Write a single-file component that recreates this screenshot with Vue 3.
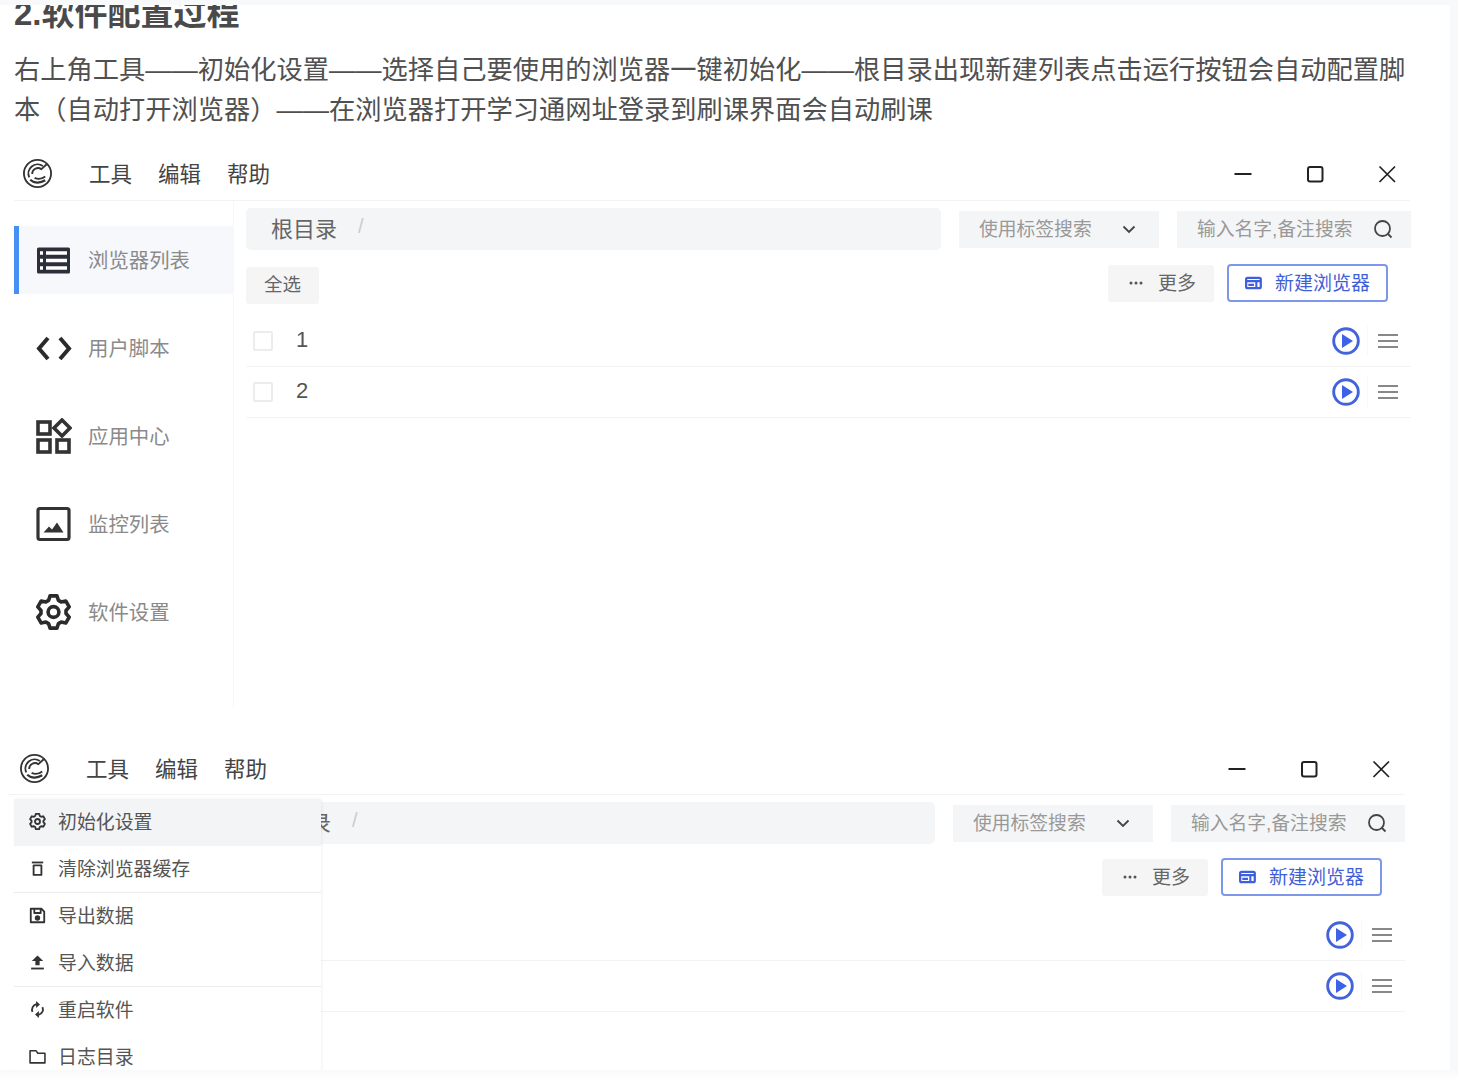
<script setup>
const text1 = '右上角工具——初始化设置——选择自己要使用的浏览器一键初始化——根目录出现新建列表点击运行按钮会自动配置脚本（自动打开浏览器）——在浏览器打开学习通网址登录到刷课界面会自动刷课'
const windows = [{ id: 1, nav: true }, { id: 2, nav: false }]
const navItems = [
  { label: '浏览器列表', icon: 'list', active: true },
  { label: '用户脚本', icon: 'code' },
  { label: '应用中心', icon: 'apps' },
  { label: '监控列表', icon: 'image' },
  { label: '软件设置', icon: 'gear' }
]
const menuItems = [
  { label: '初始化设置', icon: 'gear', hover: true },
  { label: '清除浏览器缓存', icon: 'trash', divider: true },
  { label: '导出数据', icon: 'save' },
  { label: '导入数据', icon: 'upload', divider: true },
  { label: '重启软件', icon: 'sync' },
  { label: '日志目录', icon: 'folder' }
]
const gearPath = Array.from({ length: 6 }, (_, i) => {
  const a = i * 60 - 90
  return [[8.4, a - 23], [11, a - 12], [11, a + 12], [8.4, a + 23]]
}).flat().map(([r, d], k) => {
  const t = (d * Math.PI) / 180
  return (k ? 'L' : 'M') + (12 + r * Math.cos(t)).toFixed(2) + ' ' + (12 + r * Math.sin(t)).toFixed(2)
}).join(' ') + ' Z'
</script>

<template>
  <div class="page">
    <div class="article">
      <h2 class="heading">2.软件配置过程</h2>
      <p class="para">{{ text1 }}</p>
    </div>

    <section v-for="w in windows" :key="w.id" class="window" :class="'window-' + w.id">
      <header class="titlebar">
        <svg class="logo" viewBox="0 0 32 32" fill="none" stroke="#333" stroke-width="1.900">
          <circle cx="16" cy="16" r="14" />
          <path d="M21.500 8.200A9.500 9.500 0 0 0 7.500 20" />
          <path d="M10.500 16.500a6 6 0 0 1 9.500-5l5.500-5" />
          <path d="M13 20.500c3 1.500 7 1.500 11-1.500" />
          <path d="M8.500 22.500c3.500 3.500 10 4 15.500.5" stroke-width="2.300" />
        </svg>
        <nav class="menubar">
          <span>工具</span><span>编辑</span><span>帮助</span>
        </nav>
        <div class="controls">
          <svg viewBox="0 0 20 20" width="20" height="20"><path d="M1.500 10h17" stroke="#222" stroke-width="2" fill="none" /></svg>
          <svg viewBox="0 0 20 20" width="20" height="20"><rect x="3" y="3" width="14.500" height="14.500" rx="2" stroke="#222" stroke-width="2" fill="none" /></svg>
          <svg viewBox="0 0 20 20" width="20" height="20"><path d="M2.500 2.500l15.500 15.500M18 2.500L2.500 18" stroke="#222" stroke-width="1.700" fill="none" /></svg>
        </div>
      </header>

      <div class="body">
        <aside class="sidebar" :class="{ hidden: !w.nav }">
          <template v-if="w.nav">
            <div v-for="item in navItems" :key="item.label" class="nav-item" :class="{ active: item.active }">
              <svg class="nav-icon" viewBox="0 0 36 36">
                <g v-if="item.icon === 'list'">
                  <rect x="1" y="5.500" width="33" height="26" rx="1.500" fill="#2b2f3a" />
                  <path d="M10 11h21M10 18.500h21M10 26h21M4 11h3M4 18.500h3M4 26h3" stroke="#fff" stroke-width="3.400" fill="none" />
                </g>
                <g v-else-if="item.icon === 'code'" fill="none" stroke="#2b2b2b" stroke-width="4">
                  <path d="M12 8L3 18.500 12 29M24 8l9 10.500L24 29" />
                </g>
                <g v-else-if="item.icon === 'apps'" fill="none" stroke="#333" stroke-width="3.600">
                  <rect x="2" y="4" width="12" height="12" />
                  <path d="M26 2l8 8-8 8-8-8z" />
                  <rect x="2" y="22" width="12" height="12" />
                  <rect x="21" y="22" width="12" height="12" />
                </g>
                <g v-else-if="item.icon === 'image'">
                  <rect x="2" y="2.500" width="31" height="31" rx="2" fill="none" stroke="#333" stroke-width="3.200" />
                  <path d="M7.500 26.500l5.500-6 3 3 5-7 6.500 10z" fill="#333" />
                </g>
                <g v-else transform="translate(-.5 0) scale(1.500)">
                  <path :d="gearPath" fill="none" stroke="#2b2b2b" stroke-width="2.400" stroke-linejoin="round" />
                  <circle cx="12" cy="12" r="3.600" fill="none" stroke="#2b2b2b" stroke-width="2.400" />
                </g>
              </svg>
              <span class="nav-label">{{ item.label }}</span>
            </div>
          </template>
        </aside>

        <main class="main">
          <div class="filters">
            <div class="crumb"><b>根目录</b><i>/</i></div>
            <div class="tag-select">
              <span>使用标签搜索</span>
              <svg viewBox="0 0 16 16" width="16" height="16"><path d="M2.500 5.500L8 11l5.500-5.500" stroke="#444" stroke-width="1.800" fill="none" /></svg>
            </div>
            <div class="search">
              <span>输入名字,备注搜索</span>
              <svg viewBox="0 0 20 20" width="20" height="20" fill="none" stroke="#444" stroke-width="1.800"><circle cx="9.500" cy="9.500" r="7.500" /><path d="M15 15l3.500 3.500" /></svg>
            </div>
          </div>

          <div class="actions">
            <button class="btn-gray select-all"><span>全选</span></button>
            <button class="btn-gray more">
              <svg class="dots" viewBox="0 0 14 4" width="14" height="4"><circle cx="2" cy="2" r="1.500" /><circle cx="7" cy="2" r="1.500" /><circle cx="12" cy="2" r="1.500" /></svg>
              <span>更多</span>
            </button>
            <button class="btn-new">
              <svg viewBox="0 0 18 14" width="17" height="14"><rect x="1.200" y="1.500" width="15.500" height="11" rx="1.500" fill="none" stroke="#3d5fe0" stroke-width="2.400" /><path d="M1 5h15.500M12 5v7M3.500 9h6" stroke="#3d5fe0" stroke-width="2.200" fill="none" /></svg>
              <span>新建浏览器</span>
            </button>
          </div>

          <div v-for="n in 2" :key="n" class="row">
            <span class="check"></span>
            <span class="num">{{ n }}</span>
            <svg class="play" viewBox="0 0 28 28"><circle cx="14" cy="14" r="12.300" fill="none" stroke="#4263dc" stroke-width="2.900" /><path d="M10 7v14l11-7z" fill="#3d62e8" /></svg>
            <span class="sep"></span>
            <span class="burger"></span>
          </div>
        </main>
      </div>

      <div v-if="!w.nav" class="dropdown">
        <div v-for="m in menuItems" :key="m.label" class="menu-item" :class="{ hover: m.hover, divider: m.divider }">
          <svg class="menu-icon" viewBox="0 0 24 24" fill="none" stroke="#333" stroke-width="2.600" stroke-linejoin="round">
            <g v-if="m.icon === 'gear'"><path :d="gearPath" /><circle cx="12" cy="12" r="3.500" /></g>
            <g v-else-if="m.icon === 'trash'"><path d="M4 3.500h16" /><path d="M6.500 7.500V21h11V7.500z" /></g>
            <g v-else-if="m.icon === 'save'"><path d="M2.500 2.500h15l4 4v15h-19z" /><path d="M7.500 2.500v6h9v-6" /><circle cx="12" cy="15.500" r="2.500" fill="#333" /></g>
            <g v-else-if="m.icon === 'upload'"><path d="M12 2L4 10h5v6h6v-6h5z" fill="#333" stroke="none" /><path d="M3 20.500h18" /></g>
            <g v-else-if="m.icon === 'sync'"><path d="M5 15.500a8 8 0 0 1 5.500-11M19 8.500a8 8 0 0 1-5.500 11" /><path d="M10 0l5.500 5-5.500 5zM14 14l-5.500 5 5.500 5z" fill="#333" stroke="none" /></g>
            <g v-else><path d="M1.500 4h8.500l2.500 3.500h10V21h-21z" stroke-width="2.200" /></g>
          </svg>
          <span>{{ m.label }}</span>
        </div>
      </div>
    </section>

    <div class="band-top"></div>
    <div class="band-right"></div>
    <div class="band-bottom"></div>
  </div>
</template>

<style scoped>
.page {
  position: relative;
  width: 1458px;
  height: 1080px;
  overflow: hidden;
  background: #fff;
  font-family: "Liberation Sans", "Noto Sans CJK SC", sans-serif;
  color: #444;
}
.article {
  height: 151px;
  padding-left: 14px;
  box-sizing: border-box;
}
.heading {
  margin: 0;
  height: 50px;
  font-size: 33px;
  line-height: 28px;
  font-weight: 700;
  color: #4a4a4a;
}
.para {
  margin: 0;
  width: 1404px;
  font-size: 26.250px;
  line-height: 40px;
  color: #505050;
}
.window {
  position: relative;
  width: 1396px;
  height: 594px;
}
.window-1 { margin-left: 14px; }
.window-2 { margin-left: 8px; }
.titlebar {
  display: flex;
  align-items: center;
  height: 45px;
  padding: 0 0 4px 8px;
  border-bottom: 1px solid #f3f3f3;
  box-sizing: content-box;
}
.window-2 .titlebar { padding: 1px 0 3px 11px; }
.logo { width: 31px; height: 31px; }
.menubar {
  display: flex;
  gap: 26px;
  margin: 0 0 2px 36px;
  font-size: 21.500px;
  color: #444;
}
.controls {
  display: flex;
  margin-left: auto;
  margin-right: 13px;
  gap: 52px;
}
.body { display: flex; }
.sidebar {
  width: 220px;
  padding-top: 25px;
  height: 507px;
  border-right: 1px solid #f7f7f7;
  box-sizing: border-box;
  flex: none;
}
.sidebar.hidden { border-right-color: transparent; padding-top: 0; height: 0; }
.nav-item {
  display: flex;
  align-items: center;
  height: 68px;
  margin-bottom: 20px;
  padding-left: 22px;
  font-size: 20.400px;
  color: #8a8a8a;
  box-sizing: border-box;
}
.nav-item.active {
  background: #f6f8fc;
  border-left: 5px solid #4690f4;
  padding-left: 17px;
}
.nav-icon { width: 36px; height: 36px; margin-right: 16px; flex: none; }
.nav-label { margin-bottom: 2px; }
.main {
  width: 1165px;
  margin-left: 12px;
  padding-top: 7px;
}
.filters { display: flex; align-items: center; gap: 18px; }
.crumb {
  display: flex;
  align-items: center;
  width: 695px;
  height: 42px;
  padding: 0 0 5px 25px;
  box-sizing: border-box;
  background: #f4f5f6;
  border-radius: 5px;
  font-size: 22px;
  color: #666;
}
.crumb b { font-weight: 400; }
.crumb i { margin-left: 21px; font-style: normal; color: #ccc; font-size: 20px; }
.tag-select, .search {
  display: flex;
  align-items: center;
  justify-content: space-between;
  height: 37px;
  box-sizing: border-box;
  background: #f4f5f6;
  font-size: 18.800px;
  color: #999;
  flex: none;
}
.tag-select span, .search span { margin-bottom: 3px; }
.tag-select { width: 200px; padding: 0 22px 0 20px; }
.search { width: 234px; padding: 0 18px 0 20px; }
.actions {
  display: flex;
  align-items: center;
  gap: 13px;
  margin-top: 14px;
  padding-right: 23px;
  height: 39px;
}
button { font-family: inherit; border: none; padding: 0; cursor: default; }
button span { display: block; margin-bottom: 4px; }
.btn-gray {
  height: 37px;
  background: #f5f5f6;
  color: #666;
  font-size: 18.500px;
  border-radius: 3px;
}
.select-all { width: 73px; margin-top: 3px; margin-right: auto; }
.more {
  width: 106px;
  display: flex;
  align-items: center;
  padding-left: 21px;
  box-sizing: border-box;
  font-size: 19px;
  margin-top: -1px;
}
.dots { fill: #555; margin-right: 15px; flex: none; }
.btn-new {
  width: 161px;
  height: 38px;
  margin-top: -1px;
  display: flex;
  align-items: center;
  justify-content: center;
  gap: 13px;
  background: #fff;
  border: 2px solid #7f97e9;
  border-radius: 4px;
  color: #3f5fd8;
  font-size: 19px;
  box-sizing: border-box;
}
.actions + .row { margin-top: 13px; }
.row {
  display: flex;
  align-items: center;
  height: 51px;
  box-sizing: border-box;
  border-bottom: 1px solid #f3f3f3;
  padding: 0 13px 0 7px;
}
.check {
  width: 20px;
  height: 20px;
  border: 2px solid #ececec;
  border-radius: 2px;
  box-sizing: border-box;
}
.num { margin-left: 23px; font-size: 22px; color: #555; margin-top: -2px; }
.play { width: 28px; height: 28px; margin-left: auto; }
.sep { width: 1px; height: 30px; background: #f8f8f8; margin: 0 10px 0 7px; }
.burger {
  position: relative;
  width: 20px;
  height: 14px;
  box-sizing: border-box;
  border-top: 2px solid #888;
  border-bottom: 2px solid #888;
}
.burger::after {
  content: "";
  position: absolute;
  left: 0;
  right: 0;
  top: 4px;
  height: 2px;
  background: #888;
}
.dropdown {
  position: absolute;
  left: 6px;
  top: 54px;
  width: 307px;
  background: #fff;
  box-shadow: 1px 0 3px rgba(0, 0, 0, .06);
}
.menu-item {
  display: flex;
  align-items: center;
  height: 47px;
  padding: 0 0 4px 15px;
  font-size: 18.900px;
  color: #555;
  box-sizing: border-box;
}
.menu-item.hover { background: #f3f4f5; }
.menu-item.divider { border-bottom: 1px solid #eceded; }
.menu-icon { width: 17px; height: 17px; margin-right: 12px; margin-top: 2px; flex: none; }
.band-top, .band-bottom, .band-right { position: absolute; background: #f8f9fa; }
.band-top { left: 0; top: 0; width: 100%; height: 5px; }
.band-right { right: 0; top: 0; width: 8px; height: 100%; }
.band-bottom { left: 0; bottom: 0; width: 100%; height: 10px; background: linear-gradient(#f8f9fa, #fff); }
</style>

<style>
html, body { margin: 0; padding: 0; background: #fff; }
</style>
